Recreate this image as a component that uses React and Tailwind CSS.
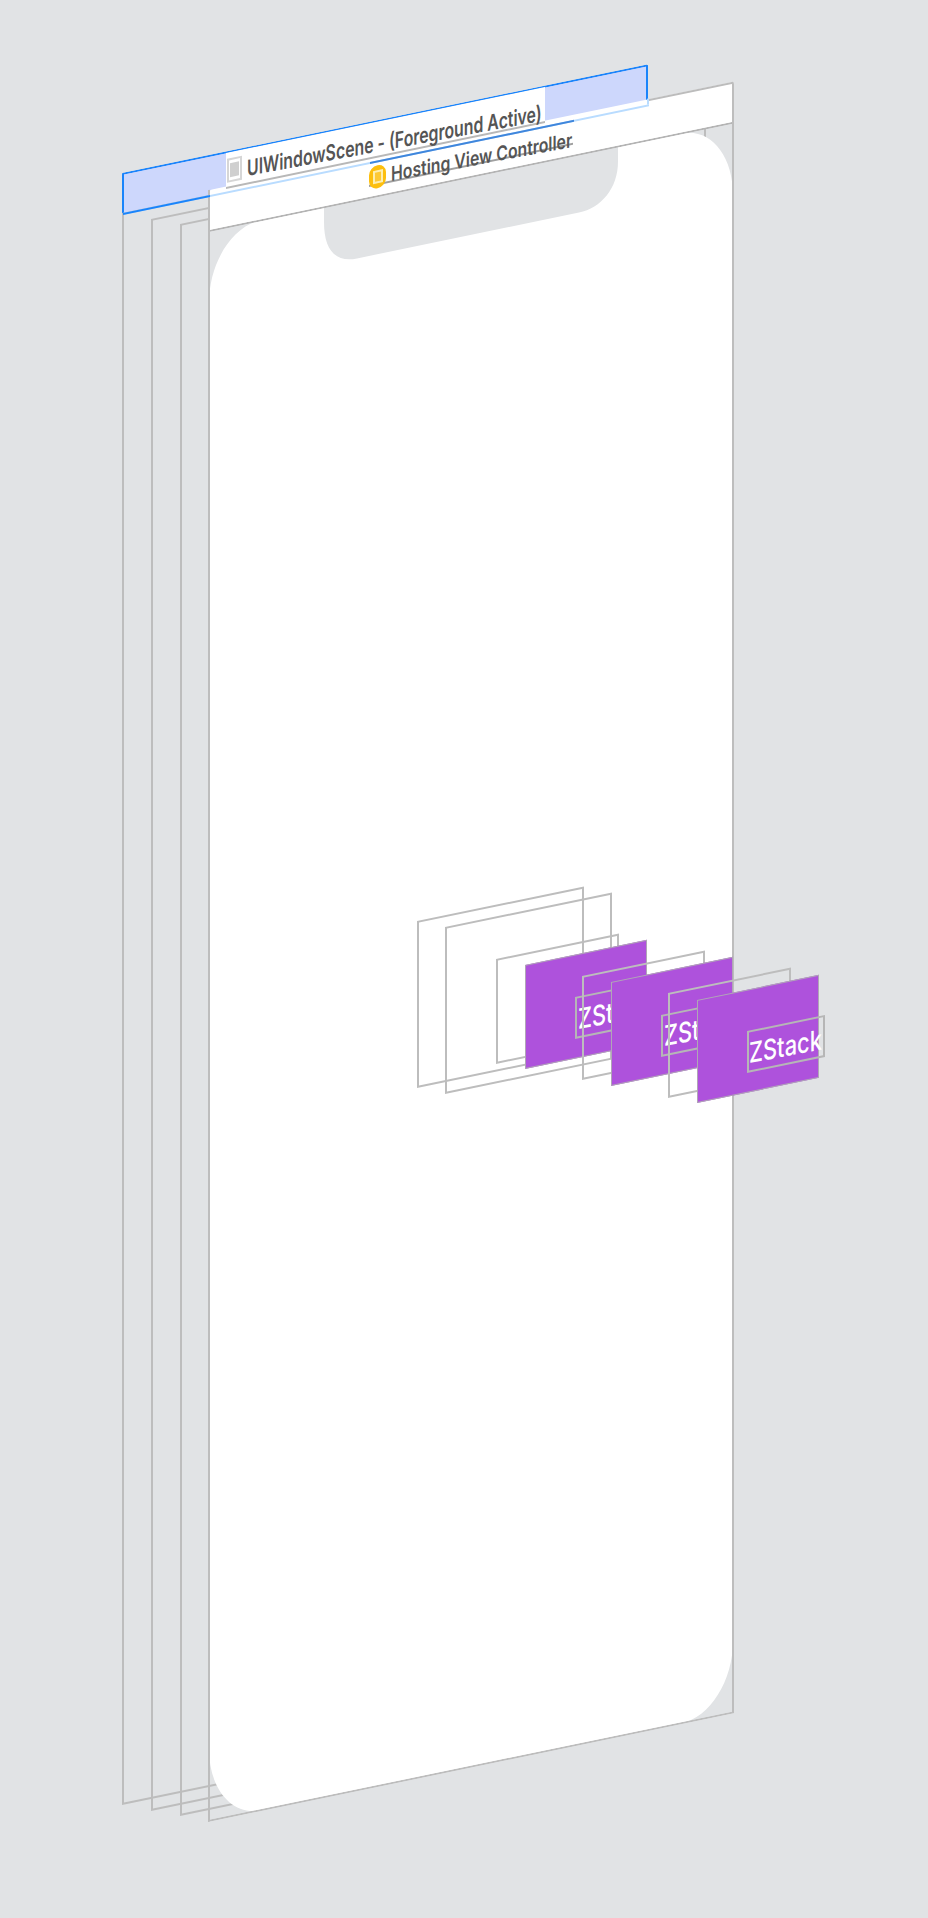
const PLANE = "absolute origin-top-left [transform:skewY(-11.67deg)]";
const LABEL = "absolute origin-top-left whitespace-nowrap leading-none [font-family:Inter,'Liberation_Sans',sans-serif]";

function Device() {
  return (
    <svg className="block overflow-visible" width="524" height="1590" viewBox="0 0 524 1590">
      <path
        fill="#ffffff"
        d="M52,0 L115,0 L115,15 C115,42 126,58 148,58 L370,58 C392,58 409,42 409,15 L409,0 L472,0 C501,0 524,32 524,72 L524,1518 C524,1558 501,1590 472,1590 L52,1590 C23,1590 0,1558 0,1518 L0,72 C0,32 23,0 52,0 Z"
      />
    </svg>
  );
}

export default function App() {
  return (
    <div className="relative w-[928px] h-[1918px] overflow-hidden bg-[#e1e3e5]">
      {/* UIWindowScene header */}
      <div className={`${PLANE} left-[122px] top-[173px] w-[526px] h-[41px] bg-[#cdd7fc] border-t-2 border-l-2 border-r-2 border-[#1a84fb] rounded-tl-[2px] rounded-tr-[2px]`} />

      {/* stacked window frames */}
      <div className={`${PLANE} left-[122px] top-[213px] w-[526px] h-[1591.5px] border-2 border-[#bdbdbd]`} />
      <div className={`${PLANE} left-[151px] top-[219px] w-[526px] h-[1591.5px] border-2 border-[#bdbdbd]`} />
      <div className={`${PLANE} left-[179.5px] top-[224px] w-[526px] h-[1591.5px] border-2 border-[#bdbdbd]`} />

      {/* device */}
      <div className={`${PLANE} left-[209px] top-[230.7px] w-[524px] h-[1590px]`}>
        <Device />
      </div>

      {/* front frame with header */}
      <div className={`${PLANE} left-[209px] top-[190px] w-[524px] h-[41.5px] bg-white border-b-2 border-[#b4b4b4] rounded-t-[3px]`}>
        <div className="absolute left-[439px] top-0 w-[85px] h-[2px] bg-[#bcbcbc]" />
      </div>
      <div className={`${PLANE} left-[208px] top-[190px] w-[526px] h-[1631.5px] border-l-2 border-r-2 border-b-2 border-[#bdbdbd] rounded-tr-[3px]`} />

      {/* UIWindowScene label */}
      <div className={`${PLANE} left-[226px] top-[153px] w-[319px] h-[35.5px] bg-white border-b-2 border-[#b8b8b8]`}>
        <div className="absolute left-[1px] top-[6px] w-[15px] h-[24px] border-2 border-[#d6d6d6] flex items-center justify-center">
          <div className="w-[9px] h-[14px] bg-[#cfcfcf]" />
        </div>
      </div>

      {/* window scene bottom edge, seen through the front header */}
      <div className={`${PLANE} left-[122.5px] top-[212.6px] w-[525.5px] h-[2px] bg-[#b9dcff]`}>
        <div className="absolute left-0 top-0 w-[86.5px] h-full bg-[#1a84fb]" />
        <div className="absolute left-[246.5px] top-0 w-[204px] h-full bg-[#3f86dc]" />
        <div className="absolute right-0 top-[-6px] w-[2px] h-[6px] bg-[#b9dcff]" />
      </div>

      {/* Hosting View Controller label */}
      <div className={`${PLANE} left-[369px] top-[162.7px] w-[204px] h-[24px] border-b-2 border-[#a0a0a0]`}>
        <div className="absolute left-0 top-[4px] w-[17px] h-[23px] rounded-full bg-[#fdbf0e] flex items-center justify-center">
          <div className="w-[10px] h-[13px] border-2 border-[#fdeeb0] bg-[#fdc935]" />
        </div>
      </div>

      <span className={`${LABEL} left-[247px] top-[157px] text-[22px] font-semibold text-[#555555] [transform:skewY(-10.6deg)_scaleX(0.72)]`}>
        UIWindowScene - (Foreground Active)
      </span>
      <span className={`${LABEL} left-[391px] top-[163.5px] text-[20px] font-semibold text-[#555555] [transform:skewY(-10.6deg)_scaleX(0.79)]`}>
        Hosting View Controller
      </span>

      {/* ZStack layers */}
      <div className={`${PLANE} left-[416.5px] top-[921px] w-[166.5px] h-[167px] border-2 border-[#bdbdbd]`} />
      <div className={`${PLANE} left-[445px] top-[926.5px] w-[166.5px] h-[167px] border-2 border-[#bdbdbd]`} />
      <div className={`${PLANE} left-[496px] top-[958.5px] w-[122.5px] h-[104.5px] border-2 border-[#bdbdbd]`} />

      <div className={`${PLANE} left-[525px] top-[965px] w-[121.5px] h-[103.5px] bg-[#ae52dc] border border-[#b0a6b6]`} />
      <div className={`${PLANE} left-[575px] top-[997px] w-[77.5px] h-[41.5px] border-2 border-[#b6b6b6]`} />
      <span className={`${LABEL} left-[577.5px] top-[1004.5px] text-[28px] font-medium text-white [transform:skewY(-10.6deg)_scaleX(0.78)]`}>ZStack</span>
      <div className={`${PLANE} left-[581.5px] top-[976px] w-[122.5px] h-[104px] border-2 border-[#bdbdbd]`} />

      <div className={`${PLANE} left-[611px] top-[982px] w-[121.5px] h-[103.5px] bg-[#ae52dc] border border-[#b0a6b6]`} />
      <div className={`${PLANE} left-[661px] top-[1014.5px] w-[77.5px] h-[41.5px] border-2 border-[#b6b6b6]`} />
      <span className={`${LABEL} left-[663.5px] top-[1021.8px] text-[28px] font-medium text-white [transform:skewY(-10.6deg)_scaleX(0.78)]`}>ZStack</span>
      <div className={`${PLANE} left-[667.5px] top-[992.5px] w-[122.5px] h-[104.5px] border-2 border-[#bdbdbd]`} />

      <div className={`${PLANE} left-[696.5px] top-[999.5px] w-[121.5px] h-[103px] bg-[#ae52dc] border border-[#b0a6b6]`} />
      <div className={`${PLANE} left-[746.5px] top-[1031px] w-[78px] h-[41.5px] border-2 border-[#b6b6b6]`} />
      <span className={`${LABEL} left-[749px] top-[1038.5px] text-[28px] font-medium text-white [transform:skewY(-10.6deg)_scaleX(0.78)]`}>ZStack</span>
    </div>
  );
}
